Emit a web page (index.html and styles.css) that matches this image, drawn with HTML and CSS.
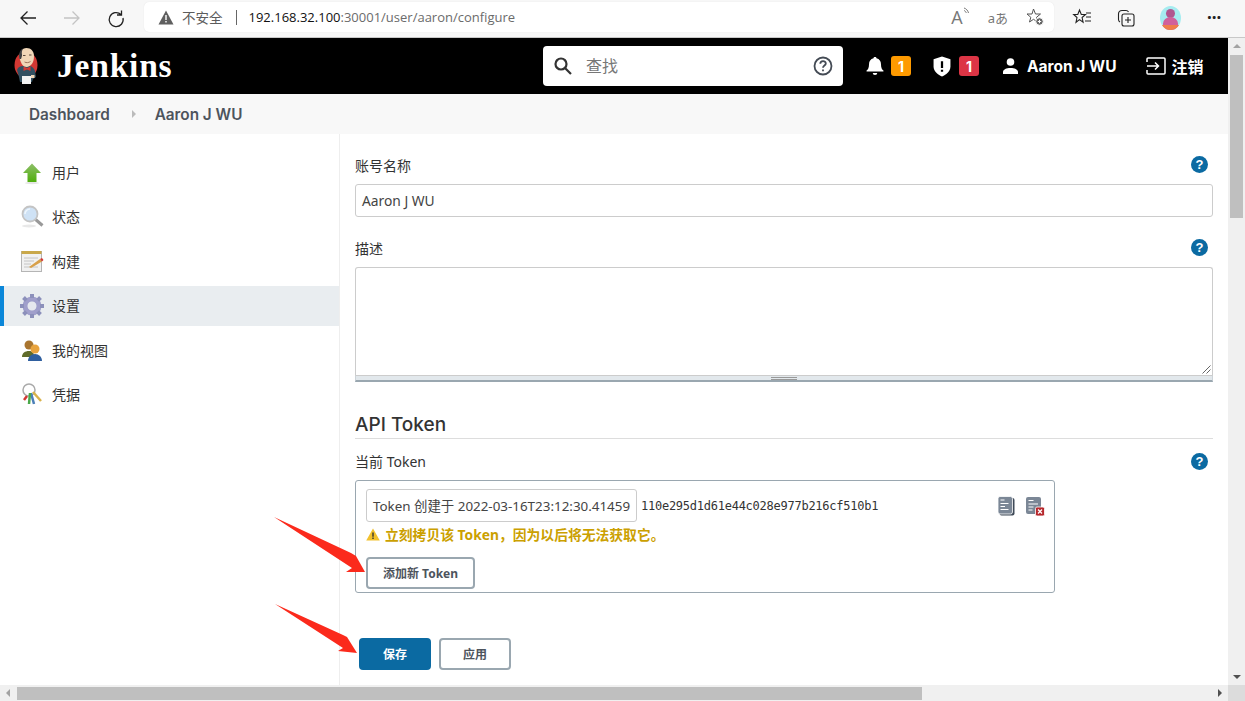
FILE: index.html

```html
<!DOCTYPE html>
<html>
<head>
  <meta charset="UTF-8">
  <title>Jenkins</title>
  <link rel="stylesheet" href="styles.css">
</head>
<body>
  <div class="browser-bar">
    <div class="nav-btns">
      <svg width="20" height="20" viewBox="0 0 20 20" fill="none" stroke="#222" stroke-width="1.3"><path d="M18 9H3M9.500 2.500 3 9l6.500 6.500"/></svg>
      <svg width="20" height="20" viewBox="0 0 20 20" fill="none" stroke="#c4c4c4" stroke-width="1.3"><path d="M2 9h15M10.500 2.500 17 9l-6.500 6.500"/></svg>
      <svg width="20" height="20" viewBox="0 0 20 20" fill="none" stroke="#222" stroke-width="1.300"><path d="M15.500 1.500V6h-4.500M15 5.500A7 7 0 1 0 17 9"/></svg>
    </div>
    <div class="address">
      <svg class="warn-ico" width="16" height="15" viewBox="0 0 16 15"><path d="M8 .5 15.500 14.500H.5z" fill="#5f5f5f"/><path d="M7.300 5h1.400v5H7.300zM7.300 11h1.400v1.500H7.300z" fill="#fff"/></svg>
      <span class="not-secure">不安全</span>
      <span class="addr-sep"></span>
      <span class="url"><b>192.168.32.100</b>:30001/user/aaron/configure</span>
      <div class="addr-tools">
        <span class="read-ico">A<svg width="8" height="10" viewBox="0 0 8 10" fill="none" stroke="#777"><path d="M1 1c2 .5 4 2.500 4.500 5M1 3.500c1 .3 2 1.300 2.300 2.500"/></svg></span>
        <span class="trans-ico">aあ</span>
        <svg width="20" height="20" viewBox="0 0 20 20" fill="none" stroke="#555"><path d="m8.500 2 2 5h5l-4 3.300 1 4.700-4-2.700L4.500 15l1.300-4.700L2 7h5z"/><circle cx="14.500" cy="14.500" r="3.800" fill="#666" stroke="#fff"/><path d="M12.800 14.500h3.400M14.500 12.800v3.400" stroke="#fff"/></svg>
      </div>
    </div>
    <div class="browser-tools">
      <svg width="20" height="20" viewBox="0 0 20 20" fill="none" stroke="#222" stroke-width="1.100"><path d="m7.500 2 1.800 4.500h4.200l-3.400 3 1 4.800-3.600-2.700L4 14.300l1-4.800-3.300-3h4.100zM14 5h5M14 9h5M13 13h6"/></svg>
      <svg width="20" height="20" viewBox="0 0 20 20" fill="none" stroke="#222" stroke-width="1.100"><rect x="6" y="6" width="12" height="12" rx="2"/><path d="M12 9v6M9 12h6M4 14c-1-.5-1.500-1-1.500-2.500V6c0-2 1.500-3.500 3.500-3.500h4c1.500 0 2 .5 2.500 1.500"/></svg>
      <span class="avatar"><span class="avatar-head"></span><span class="avatar-body"></span><span class="avatar-base"></span></span>
      <span class="dots">···</span>
    </div>
  </div>

  <div class="viewport">
    <div class="page">
      <header class="jk-header">
        <div class="logo">
          <svg width="24" height="38" viewBox="0 0 24 38">
            <ellipse cx="12" cy="18" rx="11.500" ry="13.500" fill="#d33833"/>
            <path d="M3 23c1-3 3-4 6-4h6c3 0 5 2 6 5l1 6-3 2-1 3H6l-1-5z" fill="#335061"/>
            <path d="M5.500 11C5 5 8 1 12.500 1S20 4 20 9.500c0 5-2.500 10-7 10.500-3.500.3-6-3-7.500-9z" fill="#f0d6b7"/>
            <path d="M5.500 12C4.500 7 5.500 3 9 1.500c-1 2-1.500 4-1 6 .2 1.500-.5 3-1 4.500z" fill="#3d3f42"/>
            <path d="M9 8.500h2.500M15 8h2.500" stroke="#4a3a30" stroke-width=".9"/>
            <path d="M10.500 15c2 1 4 .8 6-.5" stroke="#8a5a44" stroke-width=".8" fill="none"/>
            <path d="M13 21 9.500 19.500V24l3.500-1.500 3.500 1.500v-4.500z" fill="#d33833"/>
            <path d="M8 29h9v8H8z" fill="#f3f3f3"/>
            <path d="M17 28h3.500v3H17z" fill="#f0d6b7"/>
          </svg>
          <span class="logo-text">Jenkins</span>
        </div>
        <div class="search">
          <svg width="20" height="20" viewBox="0 0 20 20" fill="none" stroke="#333" stroke-width="2.200"><circle cx="8" cy="8" r="5.500"/><path d="m12 12 6 6"/></svg>
          <span class="search-ph">查找</span>
          <svg class="search-help" width="20" height="20" viewBox="0 0 20 20" fill="none" stroke="#444b55" stroke-width="1.800"><circle cx="10" cy="10" r="8.500"/><path d="M7.300 7.800c0-3.400 5.500-3.400 5.500-.2 0 2-2.800 2-2.800 4.200"/><path d="M10 13.500v1.800"/></svg>
        </div>
        <div class="hd-item bell">
          <svg width="18" height="20" viewBox="0 0 16 20" preserveAspectRatio="none" fill="#fff"><path d="M8 1c.8 0 1.300.5 1.300 1.300C12 3 13.300 5.500 13.300 8c0 4 1 5.500 2.200 6.500v1H.5v-1C1.700 13.500 2.700 12 2.700 8c0-2.500 1.300-5 4-5.700C6.700 1.500 7.200 1 8 1z"/><path d="M6 17h4a2 2 0 0 1-4 0z"/></svg>
          <span class="count count-warn">1</span>
        </div>
        <div class="hd-item shield">
          <svg width="18" height="21" viewBox="0 0 16 20" preserveAspectRatio="none"><path d="M8 .5 15.500 3v7c0 4.500-3.500 7.800-7.500 9.500C4 17.800.5 14.500.5 10V3z" fill="#fff"/><path d="M7 5h2v6.500H7zM7 13h2v2H7z" fill="#000"/></svg>
          <span class="count count-bad">1</span>
        </div>
        <div class="hd-item user">
          <svg width="15" height="16" viewBox="0 0 15 16" fill="#fff"><circle cx="7.500" cy="4" r="3.800"/><path d="M0 16v-2c0-2.500 3.500-4 7.500-4s7.500 1.500 7.500 4v2z"/></svg>
          <span>Aaron J WU</span>
        </div>
        <div class="hd-item logout">
          <svg width="22" height="18" viewBox="0 0 20 18" fill="none" stroke="#fff" stroke-width="1.500"><path d="M1 5V2c0-.6.400-1 1-1h16c.6 0 1 .4 1 1v14c0 .6-.4 1-1 1H2c-.6 0-1-.4-1-1v-3M1 9h11M9 5.500 12.500 9 9 12.500"/></svg>
          <span>注销</span>
        </div>
      </header>

      <div class="crumbs">
        <span>Dashboard</span>
        <span class="crumb-arrow"></span>
        <span>Aaron J WU</span>
      </div>

      <div class="main">
        <nav class="side">
          <a class="side-item">
            <svg width="24" height="24" viewBox="0 0 24 24"><defs><linearGradient id="gUp" x1="0" y1="0" x2="0" y2="1"><stop offset="0" stop-color="#8fbf6a"/><stop offset="1" stop-color="#4fae0c"/></linearGradient></defs><ellipse cx="12" cy="22" rx="7" ry="1.200" fill="#e4e4e4"/><path d="M12 2.500 21 12h-4.500v9h-9v-9H3z" fill="url(#gUp)"/></svg>
            <span>用户</span>
          </a>
          <a class="side-item">
            <svg width="24" height="24" viewBox="0 0 24 24"><ellipse cx="9" cy="21" rx="7" ry="1.500" fill="#e8e8e8"/><path d="m15 14 7.500 6.500" stroke="#999" stroke-width="3"/><circle cx="10" cy="9" r="7.500" fill="#cfe2f5" stroke="#c4c4c4" stroke-width="1.800"/><path d="M5 9a5 5 0 0 1 5-5" fill="none" stroke="#eef6fd" stroke-width="1.500"/></svg>
            <span>状态</span>
          </a>
          <a class="side-item">
            <svg width="24" height="24" viewBox="0 0 24 24"><rect x="1.500" y="1.500" width="20" height="20" fill="#f1f1f1" stroke="#b5b5b5"/><path d="M1.500 1h20v3h-20z" fill="#c9a84a"/><path d="M4 8h14M4 11h10M4 14h7M4 17h14" stroke="#c4c4c4"/><path d="m9 17 11-8 2 2.500L11 18z" fill="#d8a04a"/><path d="m20 9 2-1 1.500 2-1.500 1.500z" fill="#d33833"/></svg>
            <span>构建</span>
          </a>
          <a class="side-item side-active">
            <svg width="24" height="24" viewBox="0 0 24 24"><circle cx="12" cy="12" r="7" fill="none" stroke="#a09fcb" stroke-width="5"/><path d="M12 0v24M0 12h24M3.500 3.500l17 17M20.500 3.500l-17 17" stroke="#8c90bb" stroke-width="4" stroke-dasharray="4 16"/><circle cx="12" cy="12" r="4" fill="#e6e8ee"/></svg>
            <span>设置</span>
          </a>
          <a class="side-item">
            <svg width="24" height="24" viewBox="0 0 24 24"><circle cx="9" cy="6" r="4.500" fill="#a9752f"/><path d="M2 18c0-4 3-6 7-6s5 2 5 6z" fill="#5f6b2a"/><circle cx="15" cy="10" r="4.500" fill="#e8a33d"/><path d="M8 22c0-4 3-7 7-7s7 3 7 7z" fill="#2f5f9f"/></svg>
            <span>我的视图</span>
          </a>
          <a class="side-item">
            <svg width="24" height="24" viewBox="0 0 24 24"><circle cx="9" cy="7" r="6" fill="#fff" stroke="#aaa" stroke-width="1.500"/><path d="m13 9 8 9" stroke="#d9b24a" stroke-width="2.500"/><path d="m11 10 3 11" stroke="#4b7fb8" stroke-width="2.500"/><path d="m10 10-1 11" stroke="#4aa84a" stroke-width="2.500"/><path d="M7 13 4 17" stroke="#d33833" stroke-width="2.500"/></svg>
            <span>凭据</span>
          </a>
        </nav>

        <section class="form">
          <div class="field-head field-first">
            <label>账号名称</label>
            <span class="help">?</span>
          </div>
          <div class="input">Aaron J WU</div>

          <div class="field-head field-desc">
            <label>描述</label>
            <span class="help">?</span>
          </div>
          <div class="textarea">
            <svg class="grip" width="9" height="9" viewBox="0 0 9 9" stroke="#666"><path d="M8.500 .5l-8 8M8.500 4.500l-4 4"/></svg>
          </div>
          <div class="ta-grip"><span></span></div>

          <h2 class="section-title">API Token</h2>

          <div class="field-head field-token">
            <label>当前 Token</label>
            <span class="help">?</span>
          </div>
          <div class="token-box">
            <div class="token-row">
              <div class="token-name">Token 创建于 2022-03-16T23:12:30.41459</div>
              <span class="token-val">110e295d1d61e44c028e977b216cf510b1</span>
              <svg class="ico-copy" width="18" height="20" viewBox="0 0 18 20"><rect x="2.500" y="2" width="15" height="17.500" rx="2" fill="#3f4a58"/><rect x="1" y=".5" width="14.500" height="17.500" rx="2" fill="#7b8796" stroke="#fff" stroke-width=".8"/><path d="M3.500 4h4M3.500 7.500h8M3.500 10.500h4.500M3.500 13.500h8" stroke="#fff" stroke-width="1.200"/></svg>
              <svg class="ico-del" width="19" height="20" viewBox="0 0 19 20"><rect x="0" y="1" width="15" height="17" rx="2" fill="#7b8796"/><path d="M2.500 4.500h5M2.500 8h9.500M2.500 11h5M2.500 14h4" stroke="#fff" stroke-width="1.200"/><rect x="9.500" y="11" width="9" height="9" rx="1.500" fill="#b6282d" stroke="#fff" stroke-width=".8"/><path d="m12 13.500 4 4m0-4-4 4" stroke="#fff" stroke-width="1.300"/></svg>
            </div>
            <div class="token-warn">
              <svg width="14" height="13" viewBox="0 0 14 13"><path d="M7 .5 13.800 12.500H.2z" fill="#f2c12e"/><path d="M6.300 4.500h1.400v4.300H6.300zM6.300 9.600h1.400v1.400H6.300z" fill="#333"/></svg>
              <span>立刻拷贝该 Token，因为以后将无法获取它。</span>
            </div>
            <button class="btn btn-add">添加新 Token</button>
          </div>

          <div class="actions">
            <button class="btn btn-primary">保存</button>
            <button class="btn btn-apply">应用</button>
          </div>
        </section>
      </div>
    </div>

    <div class="vscroll">
      <span class="arrow-up"></span>
      <div class="vthumb"></div>
      <span class="arrow-down"></span>
    </div>
    <div class="hscroll">
      <span class="arrow-left"></span>
      <div class="hthumb"></div>
      <span class="arrow-right"></span>
    </div>
    <div class="scroll-corner"></div>

    <svg class="red-arrow arrow-one" width="91" height="55" viewBox="0 0 91 55"><path d="M0 0 77 36 82 39 91 55 72 55 78 51z" fill="#fb2a1c"/></svg>
    <svg class="red-arrow arrow-two" width="82" height="49" viewBox="0 0 82 49"><path d="M0 0 68 31 72 33 82 49 63 47 68 44z" fill="#fb2a1c"/></svg>
  </div>
</body>
</html>
```

FILE: styles.css

```css
* { box-sizing: border-box; }
html, body { margin: 0; height: 100%; overflow: hidden; }
body { font-family: "Noto Sans", "Noto Sans CJK SC", sans-serif; color: #333; background: #fff; font-size: 14px; }

/* browser chrome */
.browser-bar { height: 38px; background: #f7f7f7; border-bottom: 1px solid #c8c8c8; display: flex; align-items: center; }
.nav-btns { display: flex; gap: 24px; padding-left: 18px; width: 144px; flex-shrink: 0; }
.address { width: 910px; height: 30px; margin-top: -3px; background: #fff; border-radius: 5px; display: flex; align-items: center; padding-left: 14px; box-shadow: 0 0 1px #ddd; }
.warn-ico { margin-right: 8px; }
.not-secure { font-size: 13.500px; color: #5c5c5c; }
.addr-sep { width: 1px; height: 15px; background: #666; margin: 0 12px 0 13px; }
.url { font-family: "Open Sans", sans-serif; font-size: 13px; color: #6b6b6b; }
.url b { font-weight: 400; color: #111; }
.addr-tools { margin-left: auto; display: flex; align-items: center; gap: 17px; padding-right: 9px; color: #777; }
.read-ico { font-size: 18px; display: flex; font-family: "Open Sans", sans-serif; }
.read-ico svg { margin-top: 2px; }
.trans-ico { font-size: 13px; }
.browser-tools { display: flex; align-items: center; gap: 24px; padding-left: 18px; margin-top: -2px; }
.avatar { width: 21px; height: 24px; border-radius: 50%; background: #a6ecf0; position: relative; overflow: hidden; flex-shrink: 0; }
.avatar-head { position: absolute; left: 6px; top: 3px; width: 9px; height: 9px; border-radius: 50%; background: #b0568f; }
.avatar-body { position: absolute; left: 3px; top: 11px; width: 15px; height: 13px; border-radius: 50% 50% 0 0; background: #d0609c; }
.avatar-base { position: absolute; left: 0; bottom: 0; width: 21px; height: 5px; background: #ef7d4a; }
.dots { font-size: 17px; font-weight: 700; color: #222; margin-left: 2px; letter-spacing: 0; }

/* page */
.viewport { position: relative; height: 663px; overflow: hidden; }
.page { width: 1228px; height: 647px; overflow: hidden; }

.jk-header { height: 56px; background: #000; display: flex; align-items: center; color: #fff; }
.logo { display: flex; align-items: center; gap: 19px; padding-left: 14px; width: 543px; flex-shrink: 0; }
.logo-text { font-family: "Liberation Serif", serif; font-weight: 700; font-size: 33.500px; letter-spacing: .8px; }
.search { width: 300px; height: 40px; background: #fff; border-radius: 4px; display: flex; align-items: center; padding: 0 10px; flex-shrink: 0; }
.search-ph { margin-left: 13px; margin-top: -2px; font-size: 16px; color: #777; }
.search-help { margin-left: auto; }
.hd-item { display: flex; align-items: center; font-weight: 700; font-size: 14px; }
.bell { margin-left: 23px; gap: 7px; }
.shield { margin-left: 22px; gap: 8px; }
.user { margin-left: 24px; gap: 9px; font-family: Inter, "Noto Sans CJK SC", sans-serif; font-size: 15.500px; }
.logout { margin-left: 28px; gap: 5px; font-size: 16px; }
.count { width: 20px; height: 20px; border-radius: 3px; display: flex; align-items: center; justify-content: center; font-size: 14px; font-family: Inter, sans-serif; }
.count-warn { background: #fe9a00; }
.count-bad { background: #dc3545; }

.crumbs { height: 40px; background: #f8f8f8; display: flex; align-items: center; padding-left: 29px; font-family: Inter, sans-serif; font-weight: 600; font-size: 15.300px; color: #4d545d; }
.crumb-arrow { width: 0; height: 0; border-left: 4px solid #bbb; border-top: 4px solid transparent; border-bottom: 4px solid transparent; margin: 0 19px 0 22px; }

.main { display: flex; height: 551px; }
.side { width: 340px; flex-shrink: 0; border-right: 1px solid #eee; padding-top: 18.600px; }
.side-item { height: 40px; margin-bottom: 4.500px; display: flex; align-items: center; padding-left: 20px; gap: 6px; font-size: 14px; color: #333; }
.side-item svg { flex-shrink: 0; width: 24px; }
.side-item span { margin-left: 2px; margin-top: -2px; }
.side-active { background: #e9edf0; border-left: 4px solid #0b87d9; padding-left: 16px; }

/* form */
.form { flex: 1; padding: 0 15px 0 15px; min-width: 0; }
.field-head { display: flex; justify-content: space-between; align-items: center; height: 20px; font-size: 14px; }
.field-first { margin-top: 20px; }
.field-desc { margin-top: 20px; }
.field-token { margin-top: 12px; }
.field-first label, .field-desc label { margin-top: 2px; }
.help { width: 17px; height: 17px; border-radius: 50%; background: #0b6aa2; color: #fff; font-family: "Liberation Sans", sans-serif; font-weight: 700; font-size: 13px; display: flex; align-items: center; justify-content: center; margin-right: 5px; }
.input { height: 33px; margin-top: 10px; border: 1px solid #ccc; border-radius: 3px; padding-left: 6px; display: flex; align-items: center; font-size: 13.800px; color: #444; }
.textarea { height: 108px; margin-top: 10px; border: 1px solid #ccc; border-bottom: 0; border-radius: 3px 3px 0 0; position: relative; }
.grip { position: absolute; right: 1px; bottom: 1px; }
.ta-grip { height: 7px; background: #e2e8ec; border: 1px solid #ccd3d8; border-top-color: #ccc; border-bottom: 2px solid #9aa7b0; display: flex; justify-content: center; align-items: center; }
.ta-grip span { width: 26px; height: 3px; border-top: 1px solid #999; border-bottom: 1px solid #999; }
.section-title { margin: 26px 0 0; height: 31px; border-bottom: 1px solid #ddd; font-family: Inter, sans-serif; font-size: 19px; font-weight: 500; color: #333; line-height: 34px; }

.token-box { width: 700px; height: 113px; margin-top: 9px; border: 1px solid #9aa7b0; border-radius: 3px; padding: 8px 10px; }
.token-row { display: flex; align-items: center; }
.token-name { width: 271px; height: 33px; border: 1px solid #ccc; border-radius: 3px; display: flex; align-items: center; padding-left: 6px; padding-bottom: 1px; font-size: 13.400px; color: #444; white-space: nowrap; overflow: hidden; flex-shrink: 0; }
.token-val { margin-left: 4px; font-family: "DejaVu Sans Mono", monospace; font-size: 12px; letter-spacing: -.25px; color: #333; }
.ico-copy { margin-left: auto; }
.ico-del { margin-left: 11px; margin-right: -1px; }
.token-warn { display: flex; align-items: center; gap: 5px; margin-top: 2px; height: 20px; color: #cba000; font-weight: 700; font-size: 13.800px; }
.btn { font-family: "Noto Sans", "Noto Sans CJK SC", sans-serif; font-weight: 700; font-size: 12px; border-radius: 4px; background: #fff; color: #4d545d; border: 2px solid #9aa7b0; }
.btn-add { display: block; width: 109px; height: 32px; margin-top: 13px; padding: 0; }
.actions { display: flex; gap: 8px; margin-top: 45px; padding-left: 4px; }
.btn-primary { width: 72px; height: 32px; background: #0b6aa2; border-color: #0b6aa2; color: #fff; }
.btn-apply { width: 72px; height: 32px; }

/* scrollbars */
.vscroll { position: absolute; left: 1228px; top: 0; width: 17px; height: 647px; background: #f0f0f0; }
.vthumb { position: absolute; left: 2px; top: 17px; width: 13px; height: 163px; background: #bfbfbf; }
.arrow-up { position: absolute; left: 5px; top: 6px; border: 4px solid transparent; border-top: 0; border-bottom: 4px solid #a3a3a3; }
.arrow-down { position: absolute; left: 5px; bottom: 6px; border: 4px solid transparent; border-bottom: 0; border-top: 4px solid #505050; }
.hscroll { position: absolute; left: 0; top: 647px; width: 1228px; height: 16px; background: #f0f0f0; }
.hthumb { position: absolute; left: 17px; top: 2px; width: 905px; height: 13px; background: #bfbfbf; }
.arrow-left { position: absolute; left: 6px; top: 4px; border: 4px solid transparent; border-left: 0; border-right: 4px solid #a3a3a3; }
.arrow-right { position: absolute; right: 6px; top: 4px; border: 4px solid transparent; border-right: 0; border-left: 4px solid #505050; }
.scroll-corner { position: absolute; left: 1228px; top: 647px; width: 17px; height: 16px; background: #dcdcdc; }

/* annotations drawn over the page */
.red-arrow { position: absolute; }
.arrow-one { left: 274px; top: 479px; }
.arrow-two { left: 275px; top: 566px; }
```
